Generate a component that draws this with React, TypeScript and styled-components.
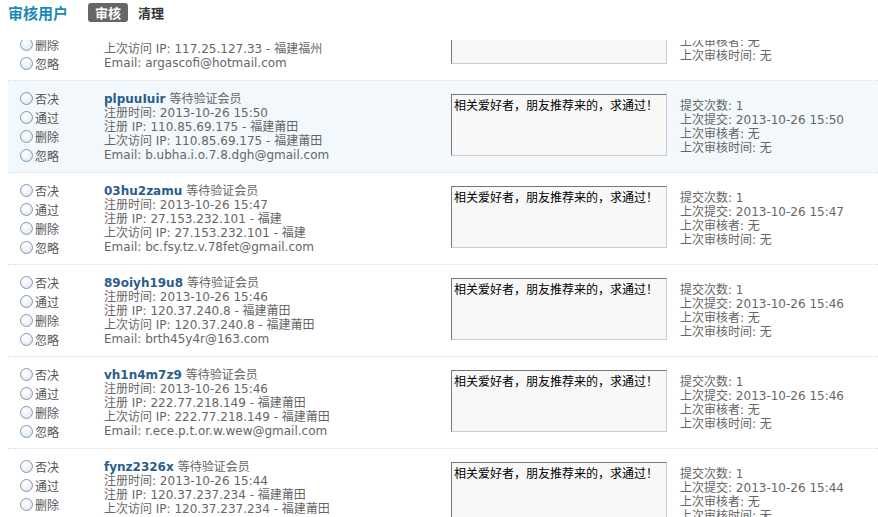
import { useEffect, useRef } from "react";
import styled, { createGlobalStyle } from "styled-components";

const GlobalStyle = createGlobalStyle`
  html, body {
    margin: 0;
    padding: 0;
    background: #fff;
    overflow: hidden;
  }
  body {
    font-family: "DejaVu Sans", Verdana, "Noto Sans CJK SC", sans-serif;
    font-size: 12px;
    color: #666;
  }
`;

const Page = styled.div`
  height: 517px;
  display: flex;
  flex-direction: column;
`;

const Header = styled.div`
  height: 40px;
  flex: none;
  display: flex;
  align-items: flex-start;
  padding: 3px 0 0 8px;
  box-sizing: border-box;
  background: #fff;
`;

const Title = styled.h2`
  margin: 0;
  height: 19px;
  line-height: 19px;
  font-family: "Noto Sans CJK SC", sans-serif;
  font-size: 15px;
  font-weight: bold;
  color: #1a8ab8;
  margin-right: 20px;
`;

const Tab = styled.span<{ $active?: boolean }>`
  display: inline-block;
  height: 19px;
  line-height: 19px;
  padding: 0 7px;
  margin-right: 3px;
  border-radius: 3px;
  font-family: "Noto Sans CJK SC", sans-serif;
  font-size: 13px;
  font-weight: bold;
  background: ${(p) => (p.$active ? "#666" : "transparent")};
  color: ${(p) => (p.$active ? "#fff" : "#333")};
`;

const Viewport = styled.div`
  flex: 1;
  overflow: hidden;
`;

const List = styled.div`
  margin-left: 8px;
`;

const Row = styled.div<{ $hover?: boolean }>`
  display: grid;
  grid-template-columns: 96px 347px 229px 1fr;
  align-items: center;
  padding: 7.5px 0;
  border-bottom: 1px dotted #d6dde3;
  background: ${(p) => (p.$hover ? "#f2f8fb" : "#fff")};
`;

const Choices = styled.div`
  display: flex;
  flex-direction: column;
  padding-left: 12px;
`;

const Choice = styled.label`
  display: flex;
  align-items: center;
  height: 19px;
  font-family: "Noto Sans CJK SC", sans-serif;
  font-size: 12px;
  color: #555;
`;

const Radio = styled.input.attrs({ type: "radio" })`
  appearance: none;
  width: 13px;
  height: 13px;
  margin: 0 2px 0 0;
  border-radius: 50%;
  border: 1px solid #7f98b4;
  box-sizing: border-box;
  background: radial-gradient(circle at 40% 35%, #fff 0%, #f1f5f9 45%, #cfdbe7 100%);
`;

const Info = styled.div`
  display: flex;
  flex-direction: column;
  line-height: 14px;
`;

const Line = styled.div`
  white-space: nowrap;
`;

const Name = styled.a`
  font-weight: bold;
  color: #2a5d8c;
  text-decoration: none;
  margin-right: 4px;
`;

const Note = styled.textarea`
  width: 216px;
  height: 62px;
  box-sizing: border-box;
  margin: 0;
  padding: 2px;
  resize: none;
  border: 1px solid;
  border-color: #777 #ccc #ccc #777;
  background: #f8f8f8;
  font-family: "Noto Sans CJK SC", sans-serif;
  font-size: 12px;
  line-height: 16px;
  color: #000;
  outline: none;
`;

const Stats = styled.div`
  display: flex;
  flex-direction: column;
  line-height: 14px;
`;

type User = {
  name: string;
  regTime: string;
  regIp: string;
  lastIp: string;
  email: string;
  submitTime: string;
  hover?: boolean;
};

const users: User[] = [
  {
    name: "argascofi",
    regTime: "2013-10-26 15:52",
    regIp: "117.25.127.33 - 福建福州",
    lastIp: "117.25.127.33 - 福建福州",
    email: "argascofi@hotmail.com",
    submitTime: "2013-10-26 15:52",
  },
  {
    name: "plpuuIuir",
    regTime: "2013-10-26 15:50",
    regIp: "110.85.69.175 - 福建莆田",
    lastIp: "110.85.69.175 - 福建莆田",
    email: "b.ubha.i.o.7.8.dgh@gmail.com",
    submitTime: "2013-10-26 15:50",
    hover: true,
  },
  {
    name: "03hu2zamu",
    regTime: "2013-10-26 15:47",
    regIp: "27.153.232.101 - 福建",
    lastIp: "27.153.232.101 - 福建",
    email: "bc.fsy.tz.v.78fet@gmail.com",
    submitTime: "2013-10-26 15:47",
  },
  {
    name: "89oiyh19u8",
    regTime: "2013-10-26 15:46",
    regIp: "120.37.240.8 - 福建莆田",
    lastIp: "120.37.240.8 - 福建莆田",
    email: "brth45y4r@163.com",
    submitTime: "2013-10-26 15:46",
  },
  {
    name: "vh1n4m7z9",
    regTime: "2013-10-26 15:46",
    regIp: "222.77.218.149 - 福建莆田",
    lastIp: "222.77.218.149 - 福建莆田",
    email: "r.ece.p.t.or.w.wew@gmail.com",
    submitTime: "2013-10-26 15:46",
  },
  {
    name: "fynz2326x",
    regTime: "2013-10-26 15:44",
    regIp: "120.37.237.234 - 福建莆田",
    lastIp: "120.37.237.234 - 福建莆田",
    email: "fynz2326x@gmail.com",
    submitTime: "2013-10-26 15:44",
  },
];

const actions = ["否决", "通过", "删除", "忽略"];

function UserRow({ user, index }: { user: User; index: number }) {
  return (
    <Row $hover={user.hover}>
      <Choices>
        {actions.map((a) => (
          <Choice key={a}>
            <Radio name={`mod-${index}`} />
            {a}
          </Choice>
        ))}
      </Choices>
      <Info>
        <Line>
          <Name href="#">{user.name}</Name>等待验证会员
        </Line>
        <Line>注册时间: {user.regTime}</Line>
        <Line>注册 IP: {user.regIp}</Line>
        <Line>上次访问 IP: {user.lastIp}</Line>
        <Line>Email: {user.email}</Line>
      </Info>
      <div>
        <Note readOnly defaultValue="相关爱好者，朋友推荐来的，求通过！" />
      </div>
      <Stats>
        <Line>提交次数: 1</Line>
        <Line>上次提交: {user.submitTime}</Line>
        <Line>上次审核者: 无</Line>
        <Line>上次审核时间: 无</Line>
      </Stats>
    </Row>
  );
}

export default function App() {
  const viewRef = useRef<HTMLDivElement>(null);

  useEffect(() => {
    if (viewRef.current) viewRef.current.scrollTop = 51;
  }, []);

  return (
    <Page>
      <GlobalStyle />
      <Header>
        <Title>审核用户</Title>
        <Tab $active>审核</Tab>
        <Tab>清理</Tab>
      </Header>
      <Viewport ref={viewRef}>
        <List>
          {users.map((u, i) => (
            <UserRow key={u.name} user={u} index={i} />
          ))}
        </List>
      </Viewport>
    </Page>
  );
}
